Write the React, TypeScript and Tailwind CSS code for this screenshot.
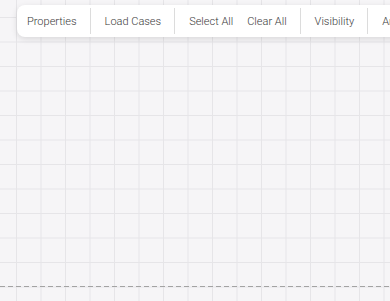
import React from 'react';

const groups: string[][] = [['Properties'], ['Load Cases'], ['Select All', 'Clear All'], ['Visibility'], ['Analysis']];

const App: React.FC = () => {
  return (
    <div
      className="relative h-[301px] w-[390px] overflow-hidden bg-[#f6f5f7] bg-[linear-gradient(to_right,#e6e5e8_1px,transparent_1px),linear-gradient(to_bottom,#e6e5e8_1px,transparent_1px)] bg-[length:24.5px_24.5px] bg-[position:16px_17px] font-['Roboto',sans-serif]"
    >
      {/* Toolbar */}
      <div className="absolute left-[17px] top-[5px] flex h-[32px] items-center whitespace-nowrap rounded-lg bg-white pl-[4px] shadow-[0_2px_6px_rgba(0,0,0,0.12)]">
        {groups.map((g, i) => (
          <React.Fragment key={i}>
            {i > 0 && <div className="ml-[7px] mr-[8px] h-[26px] w-px bg-[#dcdcdc]" />}
            <div className="flex items-center gap-[2px]">
              {g.map(label => (
                <button key={label} className="px-[6px] text-[11px] font-light leading-none text-[#3a3a3a]">
                  {label}
                </button>
              ))}
            </div>
          </React.Fragment>
        ))}
      </div>

      {/* Baseline */}
      <div className="absolute left-0 top-[286px] h-px w-full bg-[repeating-linear-gradient(90deg,#a3a3a3_0_5px,transparent_5px_8px)]" />
    </div>
  );
};

export default App;
